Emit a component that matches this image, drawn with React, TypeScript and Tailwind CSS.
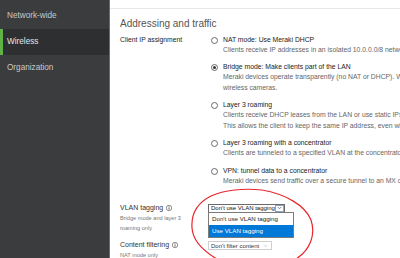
import React from 'react';

const font = "font-['Liberation_Sans',Arial,Helvetica,sans-serif]";

interface ModeOption {
  label: string;
  lines: string[];
  checked?: boolean;
  gap: string;
}

const modes: ModeOption[] = [
  {
    label: 'NAT mode: Use Meraki DHCP',
    lines: ['Clients receive IP addresses in an isolated 10.0.0.0/8 network. Clients cannot communicate with each other.'],
    gap: 'mt-0',
  },
  {
    label: 'Bridge mode: Make clients part of the LAN',
    lines: [
      'Meraki devices operate transparently (no NAT or DHCP). Wireless clients will receive DHCP leases from a server on the LAN. Use this for',
      'wireless cameras.',
    ],
    checked: true,
    gap: 'mt-[6px]',
  },
  {
    label: 'Layer 3 roaming',
    lines: [
      'Clients receive DHCP leases from the LAN or use static IPs, similar to bridge mode.',
      'This allows the client to keep the same IP address, even when roaming between access points.',
    ],
    gap: 'mt-[6.5px]',
  },
  {
    label: 'Layer 3 roaming with a concentrator',
    lines: ['Clients are tunneled to a specified VLAN at the concentrator. They will keep the same IP address when roaming.'],
    gap: 'mt-[6.5px]',
  },
  {
    label: 'VPN: tunnel data to a concentrator',
    lines: ['Meraki devices send traffic over a secure tunnel to an MX or virtual concentrator.'],
    gap: 'mt-[7px]',
  },
];

const InfoIcon = () => (
  <svg width="6" height="6" viewBox="0 0 12 12" className="ml-[3px] shrink-0">
    <circle cx="6" cy="6" r="5.4" fill="#fff" stroke="#555" strokeWidth="1.3" />
    <rect x="5.1" y="5" width="1.8" height="4.2" fill="#555" />
    <circle cx="6" cy="3.3" r="1" fill="#555" />
  </svg>
);

const Chevron = ({ color }: { color: string }) => (
  <svg width="5" height="4" viewBox="0 0 10 8">
    <path d="M1.5 2 L5 5.5 L8.5 2" fill="none" stroke={color} strokeWidth="1.4" />
  </svg>
);

const Radio = ({ checked }: { checked?: boolean }) => (
  <div className="w-[15px] shrink-0 pt-[1.75px]">
    <div className="ml-[3px] flex h-[7px] w-[7px] items-center justify-center rounded-full border border-[#6a6a6a] bg-white">
      {checked && <div className="h-[3px] w-[3px] rounded-full bg-[#333]" />}
    </div>
  </div>
);

const navItems = ['Network-wide', 'Wireless', 'Organization'];

export default function App() {
  return (
    <div className={`relative flex h-[258px] w-[400px] overflow-hidden bg-white ${font}`}>
      {/* Sidebar */}
      <div className="w-[110px] shrink-0 border-r border-[#6b6b6b] bg-[#3b3c3e] pt-[3px]">
        {navItems.map(item => (
          <div
            key={item}
            className={`flex h-[26px] items-center border-l-[3px] pl-[4px] text-[8.2px] ${
              item === 'Wireless'
                ? 'border-[#5fb246] bg-[#2e2f31] text-[#e6e6e6]'
                : 'border-transparent text-[#c9c9c9]'
            }`}
          >
            {item}
          </div>
        ))}
      </div>

      {/* Content */}
      <div className="min-w-0 flex-1 whitespace-nowrap">
        <div className="h-[9px] border-b border-[#e6e6e6]" />
        <div className="pl-[10px]">
          <h2 className="mt-[9px] text-[10px] leading-[12px] text-[#555]">Addressing and traffic</h2>

          <div className="mt-[4.75px] flex">
            <div className="w-[88px] shrink-0 text-[6.8px] leading-[10.5px] text-[#222]">Client IP assignment</div>
            <div className="min-w-0 flex-1">
              {modes.map(mode => (
                <div key={mode.label} className={`flex ${mode.gap}`}>
                  <Radio checked={mode.checked} />
                  <div className="min-w-0 text-[6.8px] leading-[10.5px]">
                    <div className="text-[#222]">{mode.label}</div>
                    {mode.lines.map(line => (
                      <div key={line} className="text-[#666]">{line}</div>
                    ))}
                  </div>
                </div>
              ))}
            </div>
          </div>

          {/* VLAN tagging */}
          <div className="mt-[16.25px] flex">
            <div className="w-[88px] shrink-0">
              <div className="flex items-center text-[7px] leading-[10px] text-[#333]">
                VLAN tagging <InfoIcon />
              </div>
              <div className="text-[5.6px] leading-[10px] text-[#777]">Bridge mode and layer 3</div>
              <div className="text-[5.6px] leading-[10px] text-[#777]">roaming only</div>
            </div>
            <div className="relative mt-[1px]">
              <div className="flex h-[8.5px] w-[77px] items-center justify-between border border-[#6b6b6b] bg-white pl-[2px] text-[6px] leading-none text-[#111]">
                <span>Don&apos;t use VLAN tagging</span>
                <div className="flex h-full w-[9px] items-center justify-center border border-[#8ea3c2] bg-white">
                  <Chevron color="#555" />
                </div>
              </div>
              <div className="absolute left-0 top-[8px] z-10 w-[86px] border border-[#7a7a7a] bg-white text-[6.2px] leading-none">
                <div className="flex h-[12px] items-center pl-[3px] text-[#222]">Don&apos;t use VLAN tagging</div>
                <div className="flex h-[12px] items-center bg-[#0078d7] pl-[3px] text-white">Use VLAN tagging</div>
              </div>
            </div>
          </div>

          {/* Content filtering */}
          <div className="mt-[7px] flex">
            <div className="w-[88px] shrink-0">
              <div className="flex items-center text-[7px] leading-[10px] text-[#333]">
                Content filtering <InfoIcon />
              </div>
              <div className="text-[5.6px] leading-[10px] text-[#777]">NAT mode only</div>
            </div>
            <div className="mt-[1px] flex h-[9px] w-[64px] items-center justify-between border border-[#cfcfcf] bg-white pl-[2px] pr-[3px] text-[6px] leading-none text-[#333]">
              <span>Don&apos;t filter content</span>
              <Chevron color="#bbb" />
            </div>
          </div>
        </div>
      </div>

      {/* Red annotation */}
      <svg className="pointer-events-none absolute left-0 top-0" width="400" height="258" viewBox="0 0 400 258">
        <path
          d="M217 259 C205 252 193 242 192 228 C191 214 197 203 211 196 C224 190 244 188 262 190 C285 194 305 205 311 220 C316 235 310 250 296 259"
          fill="none"
          stroke="#e8262b"
          strokeWidth="1.2"
          strokeLinecap="round"
        />
      </svg>
    </div>
  );
}
